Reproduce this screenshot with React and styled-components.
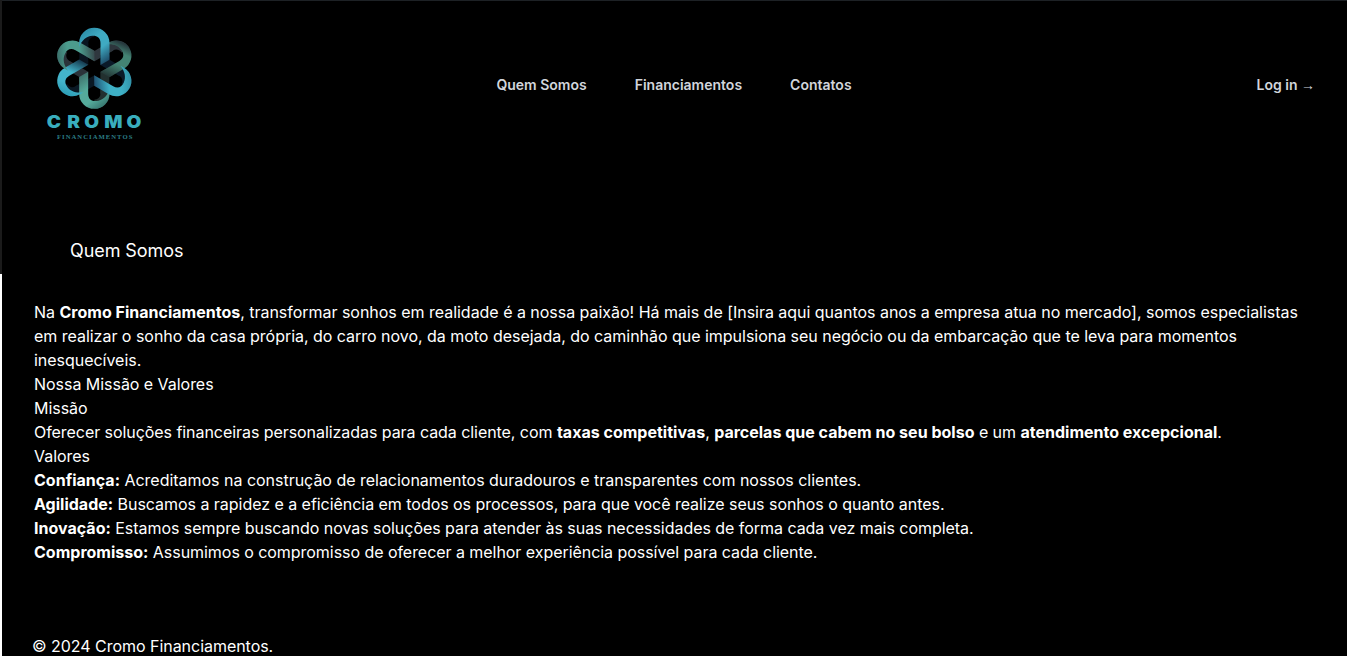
import React from "react";
import styled, { createGlobalStyle } from "styled-components";

const GlobalStyle = createGlobalStyle`
  * { box-sizing: border-box; margin: 0; padding: 0; }
  body {
    background: #fff;
    color: #fff;
    font: 400 16px/24px Inter, "Liberation Sans", sans-serif;
    letter-spacing: -0.036px;
    overflow: hidden;
  }
  strong { font-weight: 700; letter-spacing: 0.01px; }
`;

const Frame = styled.div`
  height: 656px;
  display: grid;
  grid-template-columns: 2px 1fr;
  overflow: hidden;
`;

const Edge = styled.div`
  height: 274px;
  background: #1b1b1b;
`;

const Page = styled.div`
  background: #000;
  border-top: 1px solid #1d2125;
`;

const Header = styled.header`
  height: 168px;
  padding: 0 32px;
  display: flex;
  align-items: center;
`;

const Side = styled.div`
  flex: 1;
  display: flex;
  justify-content: ${(p) => (p.$end ? "flex-end" : "flex-start")};
`;

const Nav = styled.nav`
  display: flex;
  gap: 48px;
  margin-right: 1px;
`;

const NavLink = styled.a`
  color: #d1d5db;
  font-size: 14px;
  font-weight: 600;
  line-height: 24px;
  letter-spacing: 0;
  white-space: nowrap;
`;

const Arrow = styled.span`
  font-family: "Liberation Sans", sans-serif;
`;

const LogoArt = styled.svg`
  display: block;
  width: 120px;
  height: 135px;
  margin: 0 0 5px 1px;
`;

const Title = styled.h1`
  margin-top: 68px;
  padding-left: 68px;
  font-size: 18px;
  font-weight: 400;
  line-height: 28px;
  letter-spacing: -0.08px;
`;

const Content = styled.main`
  margin-top: 35px;
  padding: 0 32px;
`;

const Heading = styled.h2`
  font: inherit;
`;

const Text = styled.p`
  letter-spacing: ${(p) => p.$tracking ?? -0.04}px;
`;

const Footer = styled.footer`
  margin-top: 70px;
  padding-left: 30px;
`;

const LOOPS = [
  { turn: 60, from: "#26383d", mid: "#438373", end: "#1f2b2d", tail: "#22302f", back: "#2d353c" },
  { turn: 180, from: "#3c7f77", mid: "#55ab9b", end: "#3b6a66", tail: "#2b333a", back: "#22302f" },
  { turn: 240, from: "#2fa0b8", mid: "#43b4cb", end: "#0d2438", tail: "#09141f", back: "#0a1824" },
  { turn: 120, from: "#3396ac", mid: "#3eb0c5", end: "#1b4265", tail: "#0a1824", back: "#0b1a29" },
  { turn: 300, from: "#3d756f", mid: "#4c9c8d", end: "#323c42", tail: "#2f373e", back: "#2b333a" },
  { turn: 0, from: "#2f93ad", mid: "#3faac2", end: "#193f5c", tail: "#0b1a29", back: "#09141f" },
];

function Logo() {
  return (
    <LogoArt viewBox="0 0 360 405" role="img" aria-label="Cromo Financiamentos">
      <defs>
        {LOOPS.map((l) => (
          <linearGradient key={l.turn} id={`loop${l.turn}`} gradientUnits="userSpaceOnUse" x1="140" y1="60" x2="210" y2="155">
            <stop offset="0" stopColor={l.from} />
            <stop offset="0.25" stopColor={l.mid} />
            <stop offset="0.55" stopColor={l.mid} />
            <stop offset="0.98" stopColor={l.end} />
          </linearGradient>
        ))}
      </defs>
      <g fill="none" strokeWidth="27">
        {LOOPS.map((l) => (
          <path key={l.turn} d="M210 120V142L260 171" stroke={l.tail} transform={`rotate(${l.turn} 178 160)`} />
        ))}
        {LOOPS.map((l) => (
          <path key={l.turn} d="M146 94V84A32 32 0 0 1 178 52" stroke={l.back} transform={`rotate(${l.turn} 178 160)`} />
        ))}
      </g>
      {LOOPS.map((l) => (
        <path
          key={l.turn}
          d="M132.5 96V84A45.5 45.5 0 0 1 223.5 84V134L196.5 150V84C196.5 67 185 61 172 62C154 63 140 76 132.5 96Z"
          fill={`url(#loop${l.turn})`}
          transform={`rotate(${l.turn} 178 160)`}
        />
      ))}
      <text transform="scale(1.08 1)" x="33 89.5 137 192.5 254.5" y="340" fontFamily="Inter, sans-serif" fontWeight="900" fontSize="53" fill="#39adbd">
        CROMO
      </text>
      <text x="66" y="372" textLength="226" fontFamily="'Liberation Serif', serif" fontWeight="700" fontSize="20" fill="#2b7d86">
        FINANCIAMENTOS
      </text>
    </LogoArt>
  );
}

export default function App() {
  return (
    <>
      <GlobalStyle />
      <Frame>
        <Edge />
        <Page>
          <Header>
            <Side><Logo /></Side>
            <Nav>
              <NavLink>Quem Somos</NavLink>
              <NavLink>Financiamentos</NavLink>
              <NavLink>Contatos</NavLink>
            </Nav>
            <Side $end><NavLink>Log in <Arrow>→</Arrow></NavLink></Side>
          </Header>
          <Title>Quem Somos</Title>
          <Content>
            <Text $tracking={-0.026}>
              Na <strong>Cromo Financiamentos</strong>, transformar sonhos em realidade é a nossa paixão! Há mais de [Insira aqui quantos anos a empresa atua no mercado], somos especialistas em realizar o sonho da casa própria, do carro novo, da moto desejada, do caminhão que impulsiona seu negócio ou da embarcação que te leva para momentos inesquecíveis.
            </Text>
            <Heading>Nossa Missão e Valores</Heading>
            <Heading as="h3">Missão</Heading>
            <Text $tracking={-0.058}>
              Oferecer soluções financeiras personalizadas para cada cliente, com <strong>taxas competitivas</strong>, <strong>parcelas que cabem no seu bolso</strong> e um <strong>atendimento excepcional</strong>.
            </Text>
            <Heading as="h3">Valores</Heading>
            <Text $tracking={-0.02}><strong>Confiança:</strong> Acreditamos na construção de relacionamentos duradouros e transparentes com nossos clientes.</Text>
            <Text><strong>Agilidade:</strong> Buscamos a rapidez e a eficiência em todos os processos, para que você realize seus sonhos o quanto antes.</Text>
            <Text><strong>Inovação:</strong> Estamos sempre buscando novas soluções para atender às suas necessidades de forma cada vez mais completa.</Text>
            <Text $tracking={-0.048}><strong>Compromisso:</strong> Assumimos o compromisso de oferecer a melhor experiência possível para cada cliente.</Text>
          </Content>
          <Footer>© 2024 Cromo Financiamentos.</Footer>
        </Page>
      </Frame>
    </>
  );
}
